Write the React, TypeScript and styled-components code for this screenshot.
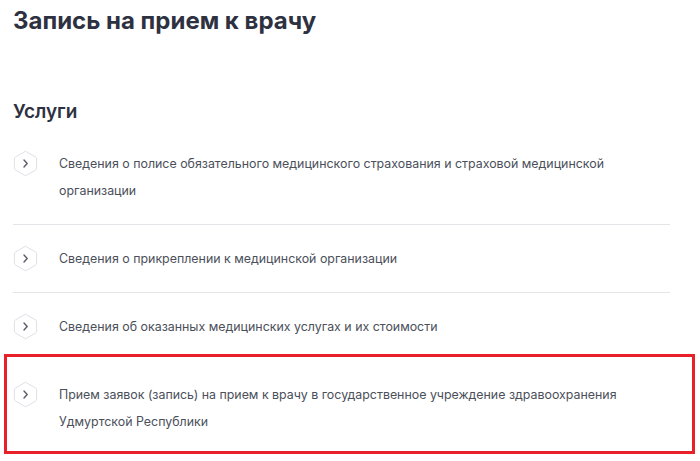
import React from 'react';
import styled, { createGlobalStyle } from 'styled-components';

const GlobalStyle = createGlobalStyle`
  body {
    margin: 0;
    background: #fff;
    font-family: Inter, 'Noto Sans', sans-serif;
    color: #4b4f5a;
  }
`;

interface Service {
  title: string;
  highlighted?: boolean;
  divider?: boolean;
}

const services: Service[] = [
  {
    title:
      'Сведения о полисе обязательного медицинского страхования и страховой медицинской организации',
    divider: true,
  },
  { title: 'Сведения о прикреплении к медицинской организации', divider: true },
  { title: 'Сведения об оказанных медицинских услугах и их стоимости' },
  {
    title:
      'Прием заявок (запись) на прием к врачу в государственное учреждение здравоохранения Удмуртской Республики',
    highlighted: true,
  },
];

const ArrowIcon: React.FC = () => (
  <svg width='25' height='27' viewBox='0 0 25 27' fill='none'>
    <path
      d='M12.5 1.2 L22.3 6.8 Q23.6 7.5 23.6 9 L23.6 18 Q23.6 19.5 22.3 20.2 L12.5 25.8 L2.7 20.2 Q1.4 19.5 1.4 18 L1.4 9 Q1.4 7.5 2.7 6.8 Z'
      stroke='#dfe1e6'
      strokeWidth='1'
      strokeLinejoin='round'
    />
    <path
      d='M11 10 L14.2 13.5 L11 17'
      stroke='#5a5e6a'
      strokeWidth='1.4'
      strokeLinecap='round'
      strokeLinejoin='round'
    />
  </svg>
);

const App: React.FC = () => {
  return (
    <>
      <GlobalStyle />
      <Page>
        <Title>Запись на прием к врачу</Title>
        <SectionTitle>Услуги</SectionTitle>
        <List>
          {services.map((s) => (
            <Item key={s.title} $divider={s.divider} $highlighted={s.highlighted}>
              <IconWrap>
                <ArrowIcon />
              </IconWrap>
              <ItemText>{s.title}</ItemText>
            </Item>
          ))}
        </List>
      </Page>
    </>
  );
};

const Page = styled.div`
  padding: 5px 0 0 13px;
`;

const Title = styled.h1`
  margin: 0;
  font-size: 24px;
  font-weight: 700;
  line-height: 31px;
  color: #2e3140;
`;

const SectionTitle = styled.h2`
  margin: 64px 0 0;
  font-size: 19px;
  font-weight: 600;
  line-height: 24px;
  color: #2e3140;
`;

const List = styled.ul`
  list-style: none;
  margin: 6px 0 0;
  padding: 0;
  width: 657px;
`;

const Item = styled.li<{ $divider?: boolean; $highlighted?: boolean }>`
  position: relative;
  display: flex;
  align-items: flex-start;
  gap: 21px;
  padding: 20px 0;
  border-bottom: 1px solid ${({ $divider }) => ($divider ? '#e4e5e9' : 'transparent')};

  &::after {
    content: '';
    display: ${({ $highlighted }) => ($highlighted ? 'block' : 'none')};
    position: absolute;
    left: -9px;
    right: -25px;
    top: -7px;
    bottom: 1px;
    border: 3px solid #e8202a;
    pointer-events: none;
  }
`;

const IconWrap = styled.span`
  flex: none;
  display: flex;
  width: 25px;
  height: 27px;
`;

const ItemText = styled.span`
  font-size: 12.4px;
  line-height: 27px;
  color: #4b4f5a;
`;

export default App;
